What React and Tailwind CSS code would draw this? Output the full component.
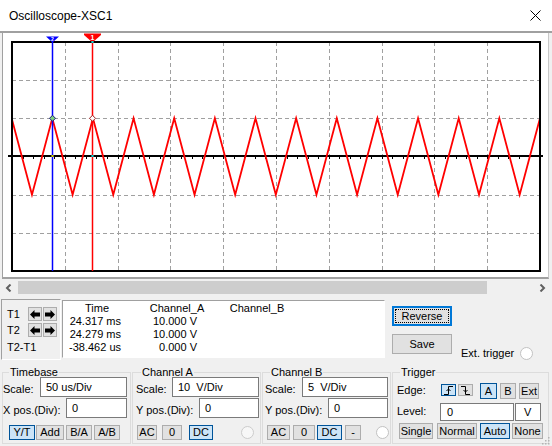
import React from "react";

const F = "font-['Liberation_Sans',Arial,sans-serif]";

function Btn({ sel = false, className = "", children }) {
  return (
    <div
      className={
        (sel ? "bg-[#cce4f7] border-[#005499] " : "bg-[#e1e1e1] border-[#adadad] ") +
        "flex items-center justify-center border text-[11px] leading-none shrink-0 " +
        className
      }
    >
      {children}
    </div>
  );
}

function Field({ className = "", children }) {
  return (
    <div className={"flex items-center border border-[#7a7a7a] bg-white text-[11px] whitespace-pre shrink-0 " + className}>
      {children}
    </div>
  );
}

function Radio({ className = "" }) {
  return <div className={"w-[13px] h-[13px] rounded-full border border-[#c2c2c2] bg-white shrink-0 " + className} />;
}

function ArrowBtn({ dir }) {
  return (
    <div className="w-[14px] h-[14px] bg-[#e1e1e1] border border-[#adadad] flex items-center justify-center shrink-0">
      <svg width="10" height="9" viewBox="0 0 10 9">
        <polygon
          points={
            dir === "left"
              ? "0,4.5 4.5,0 4.5,2.5 10,2.5 10,6.5 4.5,6.5 4.5,9"
              : "10,4.5 5.5,0 5.5,2.5 0,2.5 0,6.5 5.5,6.5 5.5,9"
          }
          fill="#000"
        />
      </svg>
    </div>
  );
}

function RiseIcon() {
  return (
    <svg width="11" height="9" viewBox="0 0 11 9">
      <path d="M1 8.5 H5.5 V0.5 H10" fill="none" stroke="#000" strokeWidth="1" />
      <path d="M3.5 5 L5.5 3 L7.5 5" fill="none" stroke="#000" strokeWidth="1" />
    </svg>
  );
}

function FallIcon() {
  return (
    <svg width="11" height="9" viewBox="0 0 11 9">
      <path d="M1 0.5 H5.5 V8.5 H10" fill="none" stroke="#000" strokeWidth="1" />
      <path d="M3.5 4 L5.5 6 L7.5 4" fill="none" stroke="#000" strokeWidth="1" />
    </svg>
  );
}

function Scope() {
  const X0 = 12, Y0 = 42, W = 528, H = 229;
  const dx = W / 10, dy = H / 6;
  const vx = Array.from({ length: 9 }, (_, i) => Math.round(X0 + (i + 1) * dx) + 0.5);
  const hy = [1, 2, 4, 5].map((k) => Math.round(Y0 + k * dy) + 0.5);
  const axisY = 156;
  const ticks = Array.from({ length: 51 }, (_, i) => Math.round(X0 + (i * dx) / 5) + 0.5);
  const P = 40.64, p0 = 52.3, top = 118.3, bot = 194.7;
  const pts = [];
  for (let k = -1; k <= 12; k++) {
    const px = p0 + k * P;
    pts.push(`${px.toFixed(2)},${top}`);
    pts.push(`${(px + P / 2).toFixed(2)},${bot}`);
  }
  return (
    <svg width="545" height="244" viewBox="3 33 545 244" className="block">
      <defs>
        <clipPath id="pc">
          <rect x={X0} y={Y0} width={W} height={H} />
        </clipPath>
      </defs>
      {vx.map((x) => (
        <line key={"v" + x} x1={x} y1={Y0} x2={x} y2={Y0 + H} stroke="#a0a0a0" strokeDasharray="4 3" />
      ))}
      {hy.map((y) => (
        <line key={"h" + y} x1={X0} y1={y} x2={X0 + W} y2={y} stroke="#a0a0a0" strokeDasharray="4 3" />
      ))}
      <line x1="8" y1={axisY} x2="543" y2={axisY} stroke="#000" strokeWidth="2" />
      {ticks.map((x) => (
        <line key={"t" + x} x1={x} y1={axisY} x2={x} y2={axisY + 3} stroke="#000" strokeWidth="1" />
      ))}
      <polyline points={pts.join(" ")} fill="none" stroke="#ff0000" strokeWidth="1.8" clipPath="url(#pc)" />
      <rect x={X0} y={Y0} width={W} height={H} fill="none" stroke="#000" strokeWidth="2" />
      {/* cursors */}
      <line x1="52.5" y1="38" x2="52.5" y2={Y0 + H} stroke="#0000ff" strokeWidth="1.5" />
      <line x1="92.5" y1="35" x2="92.5" y2={Y0 + H} stroke="#ff0000" strokeWidth="1.5" />
      <polygon points="46,36.5 59,36.5 52.5,42.5" fill="#0000ff" />
      <text x="52.5" y="40.6" fontSize="5" fontWeight="bold" fill="#fff" textAnchor="middle" fontFamily="Liberation Sans, Arial, sans-serif">2</text>
      <polygon points="84,33.5 101,33.5 101,35 92.5,42.5 84,35" fill="#ff0000" />
      <text x="92.5" y="39.6" fontSize="7" fontWeight="bold" fill="#fff" textAnchor="middle" fontFamily="Liberation Sans, Arial, sans-serif">1</text>
      <rect x="91.5" y="41" width="2" height="2" fill="#00e0e0" />
      {/* intersection markers */}
      <polygon points="52.5,115.3 55.5,118.3 52.5,121.3 49.5,118.3" fill="#7fd07f" stroke="#1a1a80" strokeWidth="1" />
      <polygon points="92.5,115.3 95.5,118.3 92.5,121.3 89.5,118.3" fill="#fff" stroke="#a02020" strokeWidth="1" />
      <rect x="51.5" y="155" width="2" height="2" fill="#e0e000" />
      <rect x="91.5" y="155" width="2" height="2" fill="#00e0e0" />
    </svg>
  );
}

export default function App() {
  const rows = [
    ["24.317 ms", "10.000 V"],
    ["24.279 ms", "10.000 V"],
    ["-38.462 us", "0.000 V"],
  ];
  return (
    <div className={`relative w-[552px] h-[446px] overflow-hidden bg-[#f0f0f0] text-black ${F}`}>
      {/* Title bar */}
      <div className="h-[31px] bg-white flex items-center justify-between pl-[9px] pr-[11px]">
        <span className="text-[12px]">Oscilloscope-XSC1</span>
        <svg width="11" height="11" viewBox="0 0 11 11">
          <path d="M0.5 0.5 L10.5 10.5 M10.5 0.5 L0.5 10.5" stroke="#000" strokeWidth="1" />
        </svg>
      </div>
      <div className="h-[2px] bg-[#a0a0a0]" />

      {/* Plot */}
      <div className="pl-[2px] pr-[3px]">
        <div className="h-[246px] bg-white border-l border-r border-b-2 border-[#a0a0a0] border-r-[#c8c8c8]">
          <Scope />
        </div>
      </div>

      {/* Scrollbar */}
      <div className="h-[17px] flex items-center pl-[5px] pr-[6px]">
        <svg width="7" height="8" viewBox="0 0 7 8">
          <path d="M5.5 0.5 L2 4 L5.5 7.5" fill="none" stroke="#606060" strokeWidth="2" />
        </svg>
        <div className="ml-[6px] w-[469px] h-[13px] bg-[#cdcdcd]" />
        <div className="flex-1" />
        <svg width="7" height="8" viewBox="0 0 7 8">
          <path d="M1.5 0.5 L5 4 L1.5 7.5" fill="none" stroke="#606060" strokeWidth="2" />
        </svg>
      </div>

      {/* Row A */}
      <div className="flex items-start mt-[3px] h-[61px] text-[11px]">
        <div className="ml-[1px] w-[60px] h-[61px] border border-t-[#a0a0a0] border-l-[#a0a0a0] border-r-white border-b-white">
          <div className="mt-[7px] flex items-center h-[14px]">
            <span className="pl-[5px] w-[26px] shrink-0">T1</span>
            <ArrowBtn dir="left" />
            <div className="w-[1px]" />
            <ArrowBtn dir="right" />
          </div>
          <div className="mt-[2px] flex items-center h-[14px]">
            <span className="pl-[5px] w-[26px] shrink-0">T2</span>
            <ArrowBtn dir="left" />
            <div className="w-[1px]" />
            <ArrowBtn dir="right" />
          </div>
          <div className="mt-[4px] pl-[5px] leading-[12px]">T2-T1</div>
        </div>

        <div className="ml-[1px] mt-[1px] w-[323px] h-[58px] bg-white border border-t-[#a0a0a0] border-l-[#a0a0a0] border-r-white border-b-white">
          <div className="flex leading-[14px]">
            <div className="w-[68px] text-center">Time</div>
            <div className="w-[92px] text-center">Channel_A</div>
            <div className="w-[68px] text-center">Channel_B</div>
          </div>
          {rows.map((r) => (
            <div key={r[0]} className="flex leading-[13px]">
              <div className="w-[58px] text-right">{r[0]}</div>
              <div className="w-[76px] text-right">{r[1]}</div>
            </div>
          ))}
        </div>

        <div className="ml-[7px] flex flex-col">
          <div className="mt-[7px] w-[60px] h-[20px] border-2 border-[#0078d7] bg-[#e1e1e1] p-[1px]">
            <div className="h-full border border-dotted border-black flex items-center justify-center">Reverse</div>
          </div>
          <Btn className="mt-[8px] w-[60px] h-[20px]">Save</Btn>
        </div>

        <div className="ml-[9px] mt-[47px] flex items-center h-[14px]">
          <span>Ext. trigger</span>
          <Radio className="ml-[6px]" />
        </div>
      </div>

      {/* Row B */}
      <div className="flex gap-[1px] ml-[2px] mt-[7px] text-[11px]">
        {/* Timebase */}
        <fieldset className="w-[129px] h-[77px] border border-[#dcdcdc]">
          <legend className="ml-[6px] px-[1px] leading-[10px]">Timebase</legend>
          <div className="flex items-start h-[20px]">
            <div className="w-[37px] pt-[6px] leading-[13px] shrink-0">Scale:</div>
            <Field className="w-[87px] h-[20px] pl-[5px]">50 us/Div</Field>
          </div>
          <div className="flex items-start h-[20px] mt-[1px]">
            <div className="w-[63px] pt-[6px] leading-[13px] whitespace-nowrap shrink-0">X pos.(Div):</div>
            <Field className="w-[61px] h-[20px] pl-[5px]">0</Field>
          </div>
          <div className="flex mt-[7px] pl-[6px]">
            <Btn sel className="w-[26px] h-[15px]">Y/T</Btn>
            <Btn className="ml-[1px] w-[28px] h-[15px]">Add</Btn>
            <Btn className="ml-[2px] w-[26px] h-[15px]">B/A</Btn>
            <Btn className="ml-[2px] w-[26px] h-[15px]">A/B</Btn>
          </div>
        </fieldset>

        {/* Channel A */}
        <fieldset className="w-[129px] h-[77px] border border-[#dcdcdc]">
          <legend className="ml-[8px] px-[1px] leading-[10px]">Channel A</legend>
          <div className="flex items-start h-[20px]">
            <div className="w-[39px] pl-[3px] pt-[6px] leading-[13px] shrink-0">Scale:</div>
            <Field className="w-[87px] h-[20px] pl-[5px]">10  V/Div</Field>
          </div>
          <div className="flex items-start h-[20px] mt-[1px]">
            <div className="w-[66px] pl-[3px] pt-[6px] leading-[13px] whitespace-nowrap shrink-0">Y pos.(Div):</div>
            <Field className="w-[60px] h-[20px] pl-[5px]">0</Field>
          </div>
          <div className="flex items-center mt-[7px] pl-[4px]">
            <Btn className="w-[20px] h-[15px]">AC</Btn>
            <Btn className="ml-[5px] w-[20px] h-[15px]">0</Btn>
            <Btn sel className="ml-[7px] w-[24px] h-[15px]">DC</Btn>
            <div className="ml-[28px] w-[13px] h-[13px] rounded-full border border-[#cccccc] bg-[#f7f7f7] shrink-0" />
          </div>
        </fieldset>

        {/* Channel B */}
        <fieldset className="w-[129px] h-[77px] border border-[#dcdcdc]">
          <legend className="ml-[7px] px-[1px] leading-[10px]">Channel B</legend>
          <div className="flex items-start h-[20px]">
            <div className="w-[39px] pl-[2px] pt-[6px] leading-[13px] shrink-0">Scale:</div>
            <Field className="w-[86px] h-[20px] pl-[5px]">5  V/Div</Field>
          </div>
          <div className="flex items-start h-[20px] mt-[1px]">
            <div className="w-[65px] pl-[2px] pt-[6px] leading-[13px] whitespace-nowrap shrink-0">Y pos.(Div):</div>
            <Field className="w-[60px] h-[20px] pl-[5px]">0</Field>
          </div>
          <div className="flex items-center mt-[7px] pl-[4px]">
            <Btn className="w-[23px] h-[15px]">AC</Btn>
            <Btn className="ml-[3px] w-[22px] h-[15px]">0</Btn>
            <Btn sel className="ml-[2px] w-[25px] h-[15px]">DC</Btn>
            <Btn className="ml-[3px] w-[16px] h-[15px]">-</Btn>
            <Radio className="ml-[15px]" />
          </div>
        </fieldset>

        {/* Trigger */}
        <fieldset className="w-[157px] h-[77px] border border-[#dcdcdc]">
          <legend className="ml-[7px] px-[1px] leading-[10px]">Trigger</legend>
          <div className="flex items-start h-[22px]">
            <div className="w-[48px] pl-[4px] pt-[7px] leading-[13px] shrink-0">Edge:</div>
            <Btn sel className="mt-[7px] w-[15px] h-[12px]">
              <RiseIcon />
            </Btn>
            <Btn className="ml-[2px] mt-[7px] w-[15px] h-[12px]">
              <FallIcon />
            </Btn>
            <Btn sel className="ml-[7px] mt-[6px] w-[17px] h-[16px]">A</Btn>
            <Btn className="ml-[3px] mt-[6px] w-[16px] h-[16px]">B</Btn>
            <Btn className="ml-[3px] mt-[6px] w-[20px] h-[16px]">Ext</Btn>
          </div>
          <div className="flex items-start mt-[4px]">
            <div className="w-[47px] pl-[4px] pt-[2px] leading-[13px] shrink-0">Level:</div>
            <Field className="w-[74px] h-[18px] pl-[6px]">0</Field>
            <Field className="ml-[1px] w-[26px] h-[18px] pl-[8px]">V</Field>
          </div>
          <div className="flex mt-[2px] pl-[6px]">
            <Btn className="w-[34px] h-[16px]">Single</Btn>
            <Btn className="ml-[4px] w-[40px] h-[16px]">Normal</Btn>
            <Btn sel className="ml-[3px] w-[30px] h-[16px]">Auto</Btn>
            <Btn className="ml-[2px] w-[31px] h-[16px]">None</Btn>
          </div>
        </fieldset>
      </div>

      {/* resize grip */}
      <svg className="absolute right-[2px] bottom-[1px]" width="9" height="9" viewBox="0 0 9 9">
        <rect x="7" y="1" width="1.5" height="1.5" fill="#b4b4b4" />
        <rect x="4" y="4" width="1.5" height="1.5" fill="#b4b4b4" />
        <rect x="7" y="4" width="1.5" height="1.5" fill="#b4b4b4" />
        <rect x="1" y="7" width="1.5" height="1.5" fill="#b4b4b4" />
        <rect x="4" y="7" width="1.5" height="1.5" fill="#b4b4b4" />
        <rect x="7" y="7" width="1.5" height="1.5" fill="#b4b4b4" />
      </svg>
    </div>
  );
}
